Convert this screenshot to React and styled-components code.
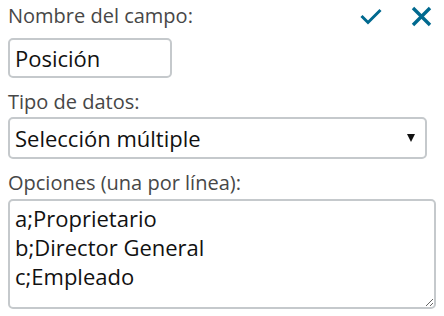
import styled, { createGlobalStyle } from 'styled-components';

const GlobalStyle = createGlobalStyle`
  html, body {
    margin: 0;
    padding: 0;
    background: #ffffff;
  }
  body {
    font-family: "Open Sans", "Liberation Sans", sans-serif;
  }
`;

const Form = styled.div`
  width: 444px;
  height: 316px;
  box-sizing: border-box;
  padding: 3px 9px 0 8px;
  display: flex;
  flex-direction: column;
`;

const HeaderRow = styled.div`
  display: flex;
  align-items: center;
  justify-content: space-between;
`;

const Label = styled.label`
  display: block;
  font-size: 20px;
  line-height: 26px;
  color: #474747;
  margin-top: ${props => props.$top || 0}px;
`;

const Actions = styled.div`
  display: flex;
  align-items: center;
  gap: 29px;
  padding-right: 3px;
  color: #00698f;
`;

const IconButton = styled.button`
  border: none;
  background: none;
  padding: 0;
  display: flex;
  color: inherit;
  cursor: pointer;
`;

const TextInput = styled.input`
  box-sizing: border-box;
  width: 164px;
  height: 40px;
  margin-top: 9px;
  padding: 0 5px;
  border: 2px solid #c5c9cc;
  border-radius: 5px;
  font-family: inherit;
  font-size: 22px;
  color: #111111;
  outline: none;
`;

const SelectWrap = styled.div`
  position: relative;
  width: 419px;
  margin-top: 2px;
`;

const Select = styled.select`
  appearance: none;
  box-sizing: border-box;
  width: 100%;
  height: 42px;
  padding: 0 30px 0 5px;
  border: 2px solid #c5c9cc;
  border-radius: 5px;
  background: #ffffff;
  font-family: inherit;
  font-size: 22px;
  color: #111111;
  outline: none;
`;

const Arrow = styled.span`
  position: absolute;
  right: 12px;
  top: 17px;
  width: 0;
  height: 0;
  border-left: 4px solid transparent;
  border-right: 4px solid transparent;
  border-top: 8px solid #111111;
  pointer-events: none;
`;

const TextArea = styled.textarea`
  box-sizing: border-box;
  width: 428px;
  height: 110px;
  margin-top: 3px;
  padding: 3px 5px;
  border: 2px solid #c5c9cc;
  border-radius: 5px;
  font-family: inherit;
  font-size: 22px;
  line-height: 29px;
  color: #111111;
  outline: none;
  resize: both;
`;

const CheckIcon = () => (
  <svg width="22" height="18" viewBox="0 0 22 18">
    <path d="M1.5 9 L8 15.5 L20.5 3" fill="none" stroke="currentColor" strokeWidth="3" />
  </svg>
);

const CloseIcon = () => (
  <svg width="21" height="21" viewBox="0 0 21 21">
    <path d="M2 2 L19 19 M19 2 L2 19" fill="none" stroke="currentColor" strokeWidth="3.4" />
  </svg>
);

export default function App() {
  return (
    <>
      <GlobalStyle />
      <Form>
        <HeaderRow>
          <Label>Nombre del campo:</Label>
          <Actions>
            <IconButton aria-label="Aceptar"><CheckIcon /></IconButton>
            <IconButton aria-label="Cancelar"><CloseIcon /></IconButton>
          </Actions>
        </HeaderRow>
        <TextInput defaultValue="Posición" />
        <Label $top={11}>Tipo de datos:</Label>
        <SelectWrap>
          <Select defaultValue="multi">
            <option value="texto">Texto</option>
            <option value="multi">Selección múltiple</option>
          </Select>
          <Arrow />
        </SelectWrap>
        <Label $top={11}>Opciones (una por línea):</Label>
        <TextArea defaultValue={'a;Proprietario\nb;Director General\nc;Empleado'} />
      </Form>
    </>
  );
}
